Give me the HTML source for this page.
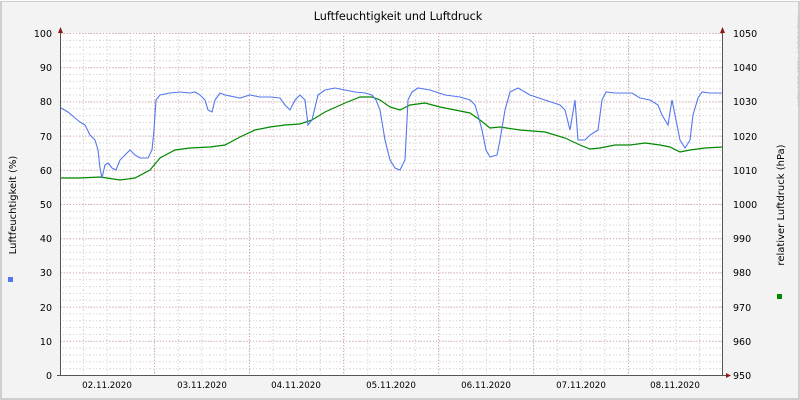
<!DOCTYPE html>
<html><head><meta charset="utf-8"><style>
html,body{margin:0;padding:0;background:#f3f3f3}
svg{display:block;font-family:"DejaVu Sans","Liberation Sans",sans-serif}
</style></head><body>
<svg width="800" height="400" viewBox="0 0 800 400" xmlns="http://www.w3.org/2000/svg">
<defs>
<pattern id="hmin" x="0" y="33" width="10" height="6.84" patternUnits="userSpaceOnUse">
<line x1="0" y1="0.5" x2="10" y2="0.5" stroke="#d4d4d4" stroke-dasharray="1,2"/>
</pattern>
<pattern id="vmin" x="11.8" y="0" width="23.7" height="10" patternUnits="userSpaceOnUse">
<line x1="0.5" y1="0" x2="0.5" y2="10" stroke="#d4d4d4" stroke-dasharray="1,2"/>
</pattern>
</defs>
<rect x="0" y="0" width="800" height="400" fill="#cfcfcf"/>
<rect x="2" y="2" width="796" height="396" fill="#f3f3f3"/>
<rect x="0" y="0" width="800" height="1" fill="#fafafa"/>
<rect x="61" y="33" width="662" height="342" fill="#ffffff"/>
<rect x="61" y="33" width="662" height="342" fill="url(#hmin)"/>
<rect x="61" y="33" width="662" height="342" fill="url(#vmin)"/>
<g stroke="#e2a8a8" stroke-dasharray="1,2">
<line x1="61" x2="723" y1="33.5" y2="33.5"/><line x1="61" x2="723" y1="67.7" y2="67.7"/>
<line x1="61" x2="723" y1="101.9" y2="101.9"/><line x1="61" x2="723" y1="136.1" y2="136.1"/>
<line x1="61" x2="723" y1="170.3" y2="170.3"/><line x1="61" x2="723" y1="204.5" y2="204.5"/>
<line x1="61" x2="723" y1="238.7" y2="238.7"/><line x1="61" x2="723" y1="272.9" y2="272.9"/>
<line x1="61" x2="723" y1="307.1" y2="307.1"/><line x1="61" x2="723" y1="341.3" y2="341.3"/>
<line y1="33" y2="375" x1="154.5" x2="154.5"/><line y1="33" y2="375" x1="249.5" x2="249.5"/>
<line y1="33" y2="375" x1="343.5" x2="343.5"/><line y1="33" y2="375" x1="438.5" x2="438.5"/>
<line y1="33" y2="375" x1="533.5" x2="533.5"/><line y1="33" y2="375" x1="628.5" x2="628.5"/>
</g>
<polyline fill="none" stroke="#008800" stroke-width="1.2" points="61,178 80,178 100,177 120,180 135,178 150,170 160,158 175,150 190,148 210,147 225,145 240,137 255,130 270,127 285,125 300,124 312,120 325,112 345,103 360,97 372,97 380,100 390,107 400,110 410,105 425,103 440,107 455,110 470,113 480,120 490,128 500,127 520,130 545,132 565,138 580,145 590,149 600,148 615,145 630,145 645,143 660,145 670,147 680,152 690,150 705,148 723,147"/>
<polyline fill="none" stroke="#5577ee" stroke-width="1.1" points="61,108 68,112 75,118 80,122 85,125 90,135 95,140 98,150 100,168 102,178 105,165 108,163 112,168 116,170 120,160 125,155 130,150 135,155 140,158 148,158 152,150 154,130 156,100 160,95 170,93 180,92 190,93 195,92 200,95 205,100 208,110 212,112 215,100 220,93 225,95 240,98 250,95 260,97 270,97 280,98 285,105 290,110 295,100 300,95 305,100 308,125 312,120 318,95 325,90 335,88 345,90 355,92 365,93 372,95 376,100 380,110 385,140 390,160 395,168 400,170 405,160 408,100 412,92 418,88 430,90 445,95 460,97 470,100 475,105 478,115 482,130 486,150 490,157 497,155 500,140 505,110 510,92 518,88 530,95 545,100 560,105 565,110 570,130 575,100 578,140 585,140 590,135 598,130 602,100 606,92 615,93 625,93 632,93 640,98 650,100 658,105 662,115 668,125 672,100 676,120 680,140 685,148 690,140 693,115 698,98 702,92 710,93 723,93"/>
<g stroke="#555" stroke-width="1">
<line x1="60.5" y1="30" x2="60.5" y2="376"/>
<line x1="722.5" y1="30" x2="722.5" y2="376"/>
<line x1="57" y1="375.5" x2="726" y2="375.5"/>
</g>
<polygon points="58,33 63,33 60.5,27" fill="#8b1a1a"/>
<polygon points="720,33 725,33 722.5,27" fill="#8b1a1a"/>
<polygon points="726,373 726,378 731,375.5" fill="#8b1a1a"/>
<g font-size="9.5" fill="#000" text-anchor="end">
<text x="52" y="37">100</text><text x="52" y="71">90</text><text x="52" y="105">80</text>
<text x="52" y="140">70</text><text x="52" y="174">60</text><text x="52" y="208">50</text>
<text x="52" y="242">40</text><text x="52" y="276">30</text><text x="52" y="311">20</text>
<text x="52" y="345">10</text><text x="52" y="379">0</text>
</g>
<g font-size="9.5" fill="#000">
<text x="733" y="37">1050</text><text x="733" y="71">1040</text><text x="733" y="105">1030</text>
<text x="733" y="140">1020</text><text x="733" y="174">1010</text><text x="733" y="208">1000</text>
<text x="733" y="242">990</text><text x="733" y="276">980</text><text x="733" y="311">970</text>
<text x="733" y="345">960</text><text x="733" y="379">950</text>
</g>
<g font-size="8.7" fill="#000" text-anchor="middle">
<text x="107" y="388">02.11.2020</text><text x="202" y="388">03.11.2020</text>
<text x="296" y="388">04.11.2020</text><text x="391" y="388">05.11.2020</text>
<text x="486" y="388">06.11.2020</text><text x="581" y="388">07.11.2020</text>
<text x="675" y="388">08.11.2020</text>
</g>
<text x="398" y="20" font-size="11.2" text-anchor="middle">Luftfeuchtigkeit und Luftdruck</text>
<text transform="translate(16,205) rotate(-90)" font-size="10" text-anchor="middle">Luftfeuchtigkeit (%)</text>
<text transform="translate(784,205) rotate(-90)" font-size="10" text-anchor="middle">relativer Luftdruck (hPa)</text>
<text transform="translate(797,60) rotate(90)" font-size="7" fill="#c8c8c8" text-anchor="middle">RRDTOOL / TOBI OETIKER</text>
<rect x="8" y="277" width="5" height="5" fill="#5577ee"/>
<rect x="777" y="294" width="5" height="5" fill="#008800"/>
</svg>
</body></html>
